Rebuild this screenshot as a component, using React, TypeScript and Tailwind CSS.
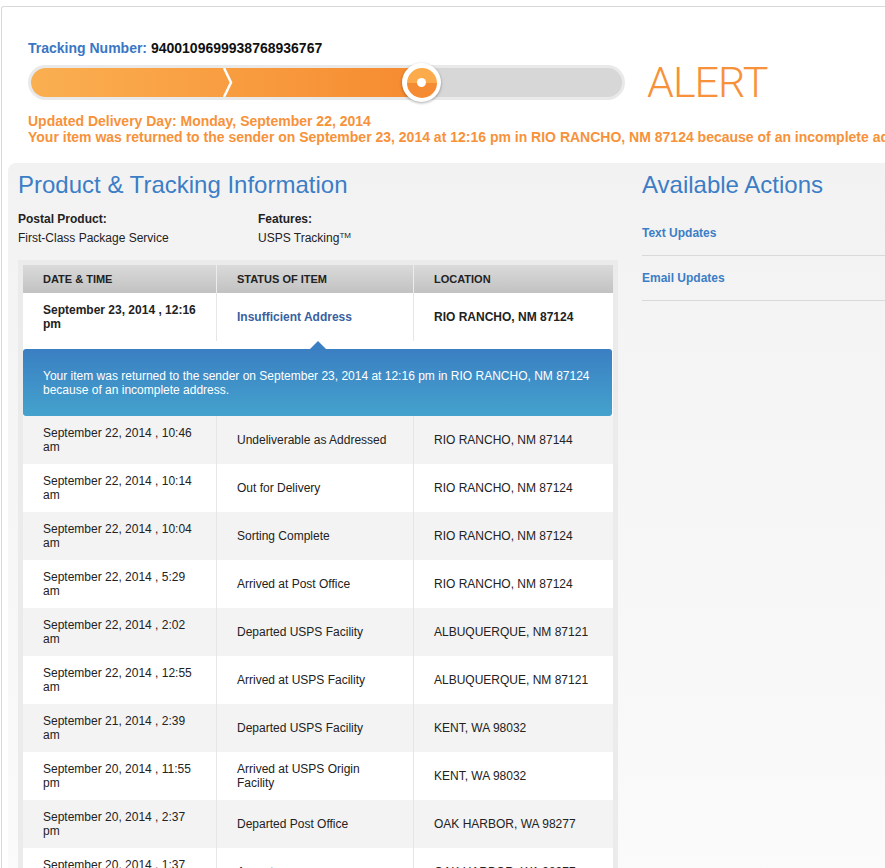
import React from "react";

type Event = {
  date: string;
  status: string;
  location: string;
};

const events: Event[] = [
  { date: "September 22, 2014 , 10:46 am", status: "Undeliverable as Addressed", location: "RIO RANCHO, NM 87144" },
  { date: "September 22, 2014 , 10:14 am", status: "Out for Delivery", location: "RIO RANCHO, NM 87124" },
  { date: "September 22, 2014 , 10:04 am", status: "Sorting Complete", location: "RIO RANCHO, NM 87124" },
  { date: "September 22, 2014 , 5:29 am", status: "Arrived at Post Office", location: "RIO RANCHO, NM 87124" },
  { date: "September 22, 2014 , 2:02 am", status: "Departed USPS Facility", location: "ALBUQUERQUE, NM 87121" },
  { date: "September 22, 2014 , 12:55 am", status: "Arrived at USPS Facility", location: "ALBUQUERQUE, NM 87121" },
  { date: "September 21, 2014 , 2:39 am", status: "Departed USPS Facility", location: "KENT, WA 98032" },
  { date: "September 20, 2014 , 11:55 pm", status: "Arrived at USPS Origin Facility", location: "KENT, WA 98032" },
  { date: "September 20, 2014 , 2:37 pm", status: "Departed Post Office", location: "OAK HARBOR, WA 98277" },
  { date: "September 20, 2014 , 1:37 pm", status: "Acceptance", location: "OAK HARBOR, WA 98277" },
];

const ProgressBar: React.FC = () => (
  <div className="flex items-center mt-[9px]">
    <div className="relative w-[597px] h-[35px] rounded-full bg-[#e9e9e9] p-[3px]">
      <div className="h-[29px] rounded-full bg-[#d7d7d7] overflow-hidden">
        <div className="h-full w-[396px] rounded-l-full bg-gradient-to-r from-[#faaf50] to-[#f68a2f] relative">
          <svg className="absolute left-[191px] top-0" width="12" height="29" viewBox="0 0 12 29">
            <polyline points="2,0 9,14.5 2,29" fill="none" stroke="#ffffff" strokeWidth="2.5" />
          </svg>
        </div>
      </div>
      {/* knob */}
      <div className="absolute left-[374px] top-[-2px] w-[39px] h-[39px] rounded-full bg-white shadow-[0_1px_3px_rgba(0,0,0,0.35)] flex items-center justify-center">
        <div className="w-[30px] h-[30px] rounded-full bg-[linear-gradient(to_bottom,#fbab4c_0%,#fbab4c_50%,#f58b32_50%,#f58b32_100%)] flex items-center justify-center">
          <div className="w-[9px] h-[9px] rounded-full bg-white" />
        </div>
      </div>
    </div>
    <span className="ml-[22px] text-[43px] leading-[35px] font-light tracking-[-1px] text-[#f7923a] font-['Roboto',_'Liberation_Sans',_sans-serif]">
      ALERT
    </span>
  </div>
);

const TrackingTable: React.FC = () => (
  <div className="mt-[14px] w-[600px] bg-[#ebebeb] px-[5px] pt-[5px] text-[12px] text-[#222]">
    <div className="flex h-[28px] bg-gradient-to-b from-[#dadada] to-[#c2c2c2] text-[11px] font-bold text-[#222] uppercase items-center">
      <div className="w-[194px] h-full flex items-center pl-[20px] border-r border-[#ececec]">Date &amp; Time</div>
      <div className="w-[197px] h-full flex items-center pl-[20px] border-r border-[#ececec]">Status of Item</div>
      <div className="flex-1 h-full flex items-center pl-[20px]">Location</div>
    </div>
    <div className="flex h-[48px] bg-white font-bold leading-[14px]">
      <div className="w-[194px] flex items-center pl-[20px] pr-[20px] border-r border-[#e6e6e6]">September 23, 2014 , 12:16 pm</div>
      <div className="w-[197px] flex items-center pl-[20px] pr-[20px] border-r border-[#e6e6e6] text-[#3a5f9f]">Insufficient Address</div>
      <div className="flex-1 flex items-center pl-[20px]">RIO RANCHO, NM 87124</div>
    </div>
    <div className="bg-white pt-[8px] relative">
      <div className="absolute left-[287px] top-0 w-0 h-0 border-l-[8px] border-r-[8px] border-b-[8px] border-l-transparent border-r-transparent border-b-[#3a80c2]" />
      <div className="w-[589px] h-[67px] rounded-[3px] bg-gradient-to-b from-[#3a7fc2] to-[#44a2cd] text-white leading-[14px] pl-[20px] pr-[20px] flex items-center">
        Your item was returned to the sender on September 23, 2014 at 12:16 pm in RIO RANCHO, NM 87124 because of an incomplete address.
      </div>
    </div>
    {events.map((ev, idx) => (
      <div key={idx} className={`flex h-[48px] leading-[14px] ${idx % 2 === 0 ? "bg-[#f3f3f3]" : "bg-white"}`}>
        <div className="w-[194px] flex items-center pl-[20px] pr-[20px] border-r border-[#e6e6e6]">{ev.date}</div>
        <div className="w-[197px] flex items-center pl-[20px] pr-[20px] border-r border-[#e6e6e6]">{ev.status}</div>
        <div className="flex-1 flex items-center pl-[20px]">{ev.location}</div>
      </div>
    ))}
  </div>
);

const App: React.FC = () => {
  return (
    <div className="w-[885px] h-[868px] overflow-hidden bg-white font-['Liberation_Sans',_Arial,_sans-serif]">
      <div className="ml-[1px] mt-[6px] w-[1000px] min-h-[900px] border-l border-t border-[#d9d9d9] rounded-tl-[3px] bg-white">
        <div className="pl-[26px] pt-[33px]">
          <div className="text-[14px] font-bold leading-[16px]">
            <span className="text-[#3a76c4]">Tracking Number: </span>
            <span className="text-[#111]">9400109699938768936767</span>
          </div>
          <ProgressBar />
          <div className="mt-[13px] text-[14px] font-bold leading-[16px] text-[#f7923a] whitespace-nowrap">
            <div>Updated Delivery Day: Monday, September 22, 2014</div>
            <div>Your item was returned to the sender on September 23, 2014 at 12:16 pm in RIO RANCHO, NM 87124 because of an incomplete address.</div>
          </div>
        </div>
        <div className="ml-[6px] mt-[18px] rounded-tl-[8px] bg-gradient-to-b from-[#f3f2f3] to-[#fbfbfb] flex px-[10px] pt-[8px] min-h-[760px]">
          <div className="w-[600px]">
            <h2 className="text-[24px] leading-[28px] text-[#3b7ec6]">Product &amp; Tracking Information</h2>
            <div className="flex mt-[12px] text-[12px] text-[#222]">
              <div className="w-[240px]">
                <div className="font-bold leading-[16px] mb-[3px]">Postal Product:</div>
                <div className="leading-[16px]">First-Class Package Service</div>
              </div>
              <div>
                <div className="font-bold leading-[16px] mb-[3px]">Features:</div>
                <div className="leading-[16px]">
                  USPS Tracking<sup className="text-[8px]">TM</sup>
                </div>
              </div>
            </div>
            <TrackingTable />
          </div>
          <div className="ml-[24px] flex-1">
            <h2 className="text-[24px] leading-[28px] text-[#3b7ec6]">Available Actions</h2>
            <div className="mt-[12px]">
              <div className="h-[45px] flex items-center border-b border-[#d9d9d9] text-[12px] font-bold text-[#3b7ec6]">Text Updates</div>
              <div className="h-[45px] flex items-center border-b border-[#d9d9d9] text-[12px] font-bold text-[#3b7ec6]">Email Updates</div>
            </div>
          </div>
        </div>
      </div>
    </div>
  );
};

export default App;
